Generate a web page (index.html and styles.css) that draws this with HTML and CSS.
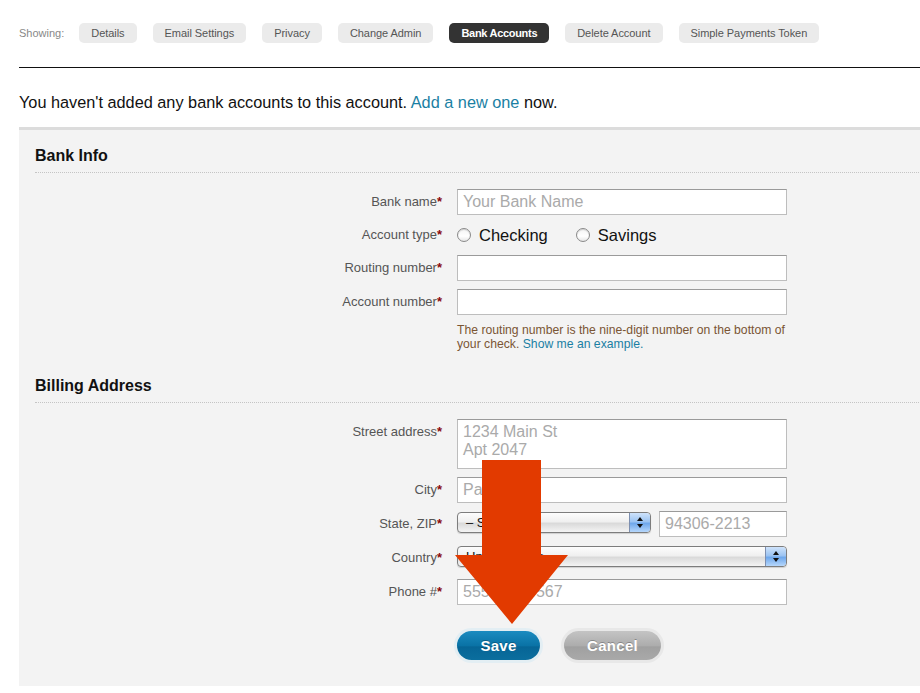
FILE: index.html
```html
<!DOCTYPE html>
<html>
<head>
<meta charset="utf-8">
<link rel="stylesheet" href="styles.css">
</head>
<body>
<div class="page">
  <div class="tabs">
    <span class="showing">Showing:</span>
    <span class="tab">Details</span>
    <span class="tab">Email Settings</span>
    <span class="tab">Privacy</span>
    <span class="tab">Change Admin</span>
    <span class="tab active">Bank Accounts</span>
    <span class="tab">Delete Account</span>
    <span class="tab">Simple Payments Token</span>
  </div>
  <div class="rule"></div>
  <p class="notice">You haven't added any bank accounts to this account. <a class="link">Add a new one</a> now.</p>

  <div class="panel">
    <h2 class="section-title">Bank Info</h2>
    <div class="form">
      <label class="lbl">Bank name<b>*</b></label>
      <div class="field"><div class="input ph">Your Bank Name</div></div>

      <label class="lbl short">Account type<b>*</b></label>
      <div class="field radios">
        <span class="radio"><i></i>Checking</span>
        <span class="radio"><i></i>Savings</span>
      </div>

      <label class="lbl">Routing number<b>*</b></label>
      <div class="field"><div class="input"></div></div>

      <label class="lbl">Account number<b>*</b></label>
      <div class="field"><div class="input"></div></div>

      <span></span>
      <p class="help">The routing number is the nine-digit number on the bottom of your check. <a class="link">Show me an example.</a></p>
    </div>

    <h2 class="section-title second">Billing Address</h2>
    <div class="form billing">
      <label class="lbl">Street address<b>*</b></label>
      <div class="field"><div class="input textarea ph">1234 Main St<br>Apt 2047</div></div>

      <label class="lbl">City<b>*</b></label>
      <div class="field"><div class="input ph">Palo Alto</div></div>

      <label class="lbl">State, ZIP<b>*</b></label>
      <div class="field statezip">
        <div class="select state"><span>– Select –</span><em class="stepper"></em></div>
        <div class="input zip ph">94306-2213</div>
      </div>

      <label class="lbl">Country<b>*</b></label>
      <div class="field"><div class="select"><span>United States</span><em class="stepper"></em></div></div>

      <label class="lbl">Phone #<b>*</b></label>
      <div class="field"><div class="input ph">555-123-4567</div></div>
    </div>

    <div class="actions">
      <button class="btn save">Save</button>
      <button class="btn cancel">Cancel</button>
    </div>
  </div>
</div>

<svg class="arrow" width="116" height="166" viewBox="0 0 116 166">
  <polygon points="27,0 86,0 86,95 113,95 57,164 0,95 27,95" fill="#e23a00"/>
</svg>
</body>
</html>
```

FILE: styles.css
```css
html, body {
  margin: 0;
  padding: 0;
  background: #fff;
  overflow: hidden;
}
body {
  font-family: "Liberation Sans", Arial, Helvetica, sans-serif;
  color: #111;
  width: 920px;
  height: 693px;
  position: relative;
}
.page {
  padding: 23px 0 0 19px;
}
.tabs {
  display: flex;
  align-items: center;
  gap: 16px;
  height: 20px;
  font-size: 11px;
}
.showing {
  color: #888;
  margin-right: -1px;
}
.tab {
  background: #ebebeb;
  color: #555;
  border-radius: 5px;
  height: 20px;
  line-height: 20px;
  padding: 0 12px;
  white-space: nowrap;
  letter-spacing: -0.05px;
}
.tab.active {
  background: #333;
  color: #fff;
  font-weight: bold;
  letter-spacing: -0.3px;
}
.rule {
  margin-top: 24px;
  height: 1px;
  background: #111;
}
.notice {
  margin: 24px 0 0;
  font-size: 16.3px;
  line-height: 20px;
  color: #111;
}
.link {
  color: #1a7fa3;
  text-decoration: none;
}
.panel {
  margin-top: 15px;
  border-top: 3px solid #dcdcdc;
  background: #f3f3f3;
  padding: 16px 0 26px 16px;
  width: 920px;
}
.section-title {
  margin: 0;
  font-size: 16px;
  line-height: 20px;
  font-weight: bold;
  color: #111;
  padding-bottom: 6px;
  border-bottom: 1px dotted #c4c4c4;
}
.section-title.second {
  margin-top: 25px;
}
.form {
  display: grid;
  grid-template-columns: 407px 330px;
  column-gap: 15px;
  row-gap: 8px;
  margin-top: 16px;
}
.form.billing {
  margin-top: 16px;
}
.lbl {
  font-size: 13px;
  color: #555;
  text-align: right;
  line-height: 26px;
  height: 26px;
}
.lbl.short {
  line-height: 24px;
  height: 24px;
}
.lbl b {
  color: #8b0a0a;
  font-weight: bold;
}
.field {
  min-height: 24px;
}
.input {
  box-sizing: border-box;
  height: 26px;
  background: #fff;
  border: 1px solid #bdbdbd;
  border-top-color: #9a9a9a;
  font-size: 16px;
  line-height: 24px;
  padding: 0 5px;
  color: #222;
}
.input.ph {
  color: #aaa;
}
.input.textarea {
  height: 50px;
  line-height: 18px;
  padding-top: 3px;
}
.radios {
  display: flex;
  align-items: center;
  gap: 28px;
  height: 24px;
  font-size: 16.5px;
  color: #111;
}
.radio {
  display: flex;
  align-items: center;
  gap: 8px;
}
.radio i {
  display: block;
  width: 12px;
  height: 12px;
  border-radius: 50%;
  border: 1px solid #8a8a8a;
  background: linear-gradient(#f4f4f4, #fff 60%, #e6e6e6);
  box-shadow: inset 0 1px 1px rgba(0,0,0,0.15);
}
.help {
  font-size: 12.2px;
  line-height: 14px;
  color: #7a5533;
  margin: 0;
}
.statezip {
  display: flex;
  justify-content: space-between;
  align-items: flex-start;
}
.select {
  box-sizing: border-box;
  height: 21px;
  margin-top: 1px;
  border: 1px solid #7d7d7d;
  border-radius: 4px;
  background: linear-gradient(#fdfdfd, #f0f0f0 45%, #dadada 55%, #f4f4f4);
  display: flex;
  align-items: center;
  justify-content: space-between;
  font-size: 13px;
  color: #111;
  padding-left: 8px;
  overflow: hidden;
  box-shadow: 0 1px 1px rgba(0,0,0,0.15);
}
.select.state {
  width: 194px;
}
.stepper {
  width: 20px;
  height: 19px;
  border-left: 1px solid #7d8fb0;
  background: linear-gradient(#cfe3fb, #9cc4f2 45%, #6fa8ec 55%, #b6d7fb);
  position: relative;
  border-radius: 0 3px 3px 0;
}
.stepper::before, .stepper::after {
  content: "";
  position: absolute;
  left: 7px;
  border-left: 3px solid transparent;
  border-right: 3px solid transparent;
}
.stepper::before {
  top: 4px;
  border-bottom: 4px solid #111;
}
.stepper::after {
  top: 11px;
  border-top: 4px solid #111;
}
.input.zip {
  width: 128px;
}
.actions {
  display: flex;
  gap: 24px;
  margin: 26px 0 0 422px;
}
.btn {
  font-family: "Liberation Sans", Arial, sans-serif;
  font-size: 15px;
  font-weight: bold;
  color: #fff;
  height: 29px;
  border-radius: 15px;
  border: none;
  padding: 0;
  letter-spacing: 0.3px;
  text-shadow: 0 -1px 0 rgba(0,0,0,0.25);
}
.btn.save {
  width: 83px;
  background: linear-gradient(#1b8bc0, #0a73a6 50%, #066596 55%, #0b6e9e);
  box-shadow: 0 0 0 3px #e3eef3;
}
.btn.cancel {
  width: 97px;
  background: linear-gradient(#c4c4c4, #adadad 50%, #a0a0a0 55%, #a9a9a9);
  box-shadow: 0 0 0 3px #e8e8e8;
}
.arrow {
  position: absolute;
  left: 455px;
  top: 460px;
}
```
